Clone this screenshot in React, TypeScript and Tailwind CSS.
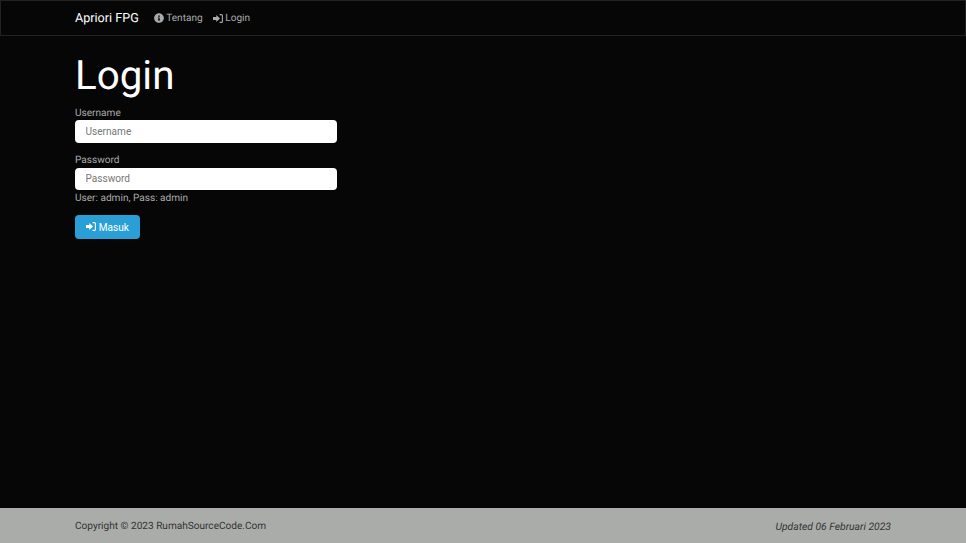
import { FaInfoCircle } from "react-icons/fa";

function SignInIcon() {
  return (
    <svg viewBox="0 0 10 9" className="w-2.5 h-[9px] shrink-0">
      <path d="M0 3.1H3.3V1L7 4.5 3.3 8V5.9H0z" fill="currentColor" />
      <path d="M6.6 .6H8.4Q9.4 .6 9.4 1.6V7.4Q9.4 8.4 8.4 8.4H6.6" fill="none" stroke="currentColor" strokeWidth="1.1" />
    </svg>
  );
}

export default function App() {
  return (
    <div className="min-h-[543px] h-screen bg-[#060606] flex flex-col font-['Roboto',sans-serif] [text-rendering:geometricPrecision] text-[10.08px] leading-[14.4px] text-[#aaaaaa]">
      {/* Navbar */}
      <nav className="h-9 shrink-0 bg-[#060606] border border-[#222222]">
        <div className="w-[846px] mx-auto px-[15px] h-full flex items-center">
          <a className="text-[12.6px] text-white mr-[15px] pt-[2px]">Apriori FPG</a>
          <a className="flex items-center gap-[2.5px] mr-[10px]">
            <FaInfoCircle className="w-2.5 h-2.5" />
            <span className="pt-[2px]">Tentang</span>
          </a>
          <a className="flex items-center gap-[2.5px]">
            <SignInIcon />
            <span className="pt-[2px]">Login</span>
          </a>
        </div>
      </nav>

      {/* Form */}
      <main className="flex-1">
        <div className="w-[846px] mx-auto px-[15px]">
          <h1 className="text-[40.32px] leading-[44px] text-white font-normal mt-[18px] mb-[7.6px]">Login</h1>
          <div className="w-[262px]">
            <label className="block h-[14.4px] leading-[16.4px]">Username</label>
            <input
              placeholder="Username"
              className="block w-full h-[22.8px] rounded-[4px] bg-white px-[10.5px] text-[10.08px] text-[#333333] placeholder:text-[#777777] outline-none"
            />
            <label className="block h-[14.4px] leading-[16.4px] mt-[10.4px]">Password</label>
            <input
              type="password"
              placeholder="Password"
              className="block w-full h-[22.8px] rounded-[4px] bg-white px-[10.5px] text-[10.08px] text-[#333333] placeholder:text-[#777777] outline-none"
            />
            <p className="h-[14.4px] leading-[16.4px] mt-[0.6px]">User: admin, Pass: admin</p>
            <button className="mt-[9.6px] h-6 px-[10.8px] rounded-[4px] bg-[#2a9fd6] text-white flex items-center gap-[3px]">
              <SignInIcon />
              <span className="pt-[2px]">Masuk</span>
            </button>
          </div>
        </div>
      </main>

      {/* Footer */}
      <footer className="h-[35px] shrink-0 bg-[#aaacaa] text-[#333333]">
        <div className="w-[846px] mx-auto px-[15px] pt-[3px] h-full flex items-center justify-between">
          <span>Copyright © 2023 RumahSourceCode.Com</span>
          <em className="text-[10.35px]">Updated 06 Februari 2023</em>
        </div>
      </footer>
    </div>
  );
}
